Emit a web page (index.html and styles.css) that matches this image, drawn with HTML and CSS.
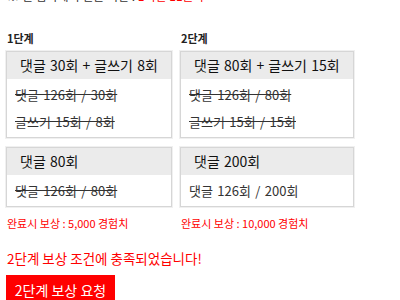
FILE: index.html
```html
<!DOCTYPE HTML>
<html>
  <head>
    <meta charset="UTF-8">
    <title>단계 보상</title>
    <link rel="stylesheet" href="styles.css">
  </head>
  <body>
    <p class="notice">※ 현 접속에서 얻은 시간 : <span class="red">1시간 11분 후</span></p>

    <div class="steps">
      <div class="step">
        <div class="step-title">1단계</div>
        <div class="card">
          <div class="card-head">댓글 30회 + 글쓰기 8회</div>
          <div class="card-body">
            <div class="done">댓글 126회 / 30회</div>
            <div class="done">글쓰기 15회 / 8회</div>
          </div>
        </div>
        <div class="card">
          <div class="card-head">댓글 80회</div>
          <div class="card-body">
            <div class="done">댓글 126회 / 80회</div>
          </div>
        </div>
        <div class="reward">완료시 보상 : 5,000 경험치</div>
      </div>

      <div class="step">
        <div class="step-title">2단계</div>
        <div class="card">
          <div class="card-head">댓글 80회 + 글쓰기 15회</div>
          <div class="card-body">
            <div class="done">댓글 126회 / 80회</div>
            <div class="done">글쓰기 15회 / 15회</div>
          </div>
        </div>
        <div class="card">
          <div class="card-head">댓글 200회</div>
          <div class="card-body">
            <div>댓글 126회 / 200회</div>
          </div>
        </div>
        <div class="reward">완료시 보상 : 10,000 경험치</div>
      </div>
    </div>

    <p class="message">2단계 보상 조건에 충족되었습니다!</p>
    <button type="button" class="button">2단계 보상 요청</button>
  </body>
</html>
```

FILE: styles.css
```css
body {
  margin: 0;
  padding: 0 6px;
  font-family: "Noto Sans CJK KR", "Liberation Sans", sans-serif;
  color: #222222;
  background: #ffffff;
}

.notice {
  margin: -11px 0 0 1px;
  font-size: 12px;
  line-height: 14px;
  color: #333333;
}

.red {
  color: #ff0000;
}

.steps {
  display: grid;
  grid-template-columns: 166px 174px;
  column-gap: 8px;
  margin-top: 28px;
}

.step-title {
  font-size: 11px;
  font-weight: bold;
  line-height: 14px;
  margin: 0 0 6px 1px;
}

.card {
  border: 1px solid #d6d6d6;
  box-shadow: 0 0 0 1px #f0f0f0;
  margin-bottom: 9px;
}

.card-head {
  background: #ebebeb;
  padding: 0 13px;
  height: 27px;
  line-height: 27px;
  font-size: 14px;
  word-spacing: 1px;
  color: #111111;
  white-space: nowrap;
}

.card-body {
  padding: 2px 8px;
  font-size: 13px;
  word-spacing: 1.5px;
  color: #333333;
}

.card-body div {
  height: 27px;
  line-height: 27px;
}

.done {
  text-decoration: line-through;
}

.reward {
  color: #ff0000;
  font-size: 11px;
  line-height: 14px;
  margin-left: 1px;
}

.message {
  color: #ff0000;
  font-size: 13.5px;
  line-height: 18px;
  margin: 19px 0 0 1px;
}

.button {
  display: block;
  margin-top: 8px;
  padding: 0;
  width: 109px;
  height: 30px;
  border: none;
  background-color: #ff0000;
  color: #ffffff;
  font-family: "Noto Sans CJK KR", "Liberation Sans", sans-serif;
  font-size: 14px;
  line-height: 30px;
  cursor: pointer;
}
```
